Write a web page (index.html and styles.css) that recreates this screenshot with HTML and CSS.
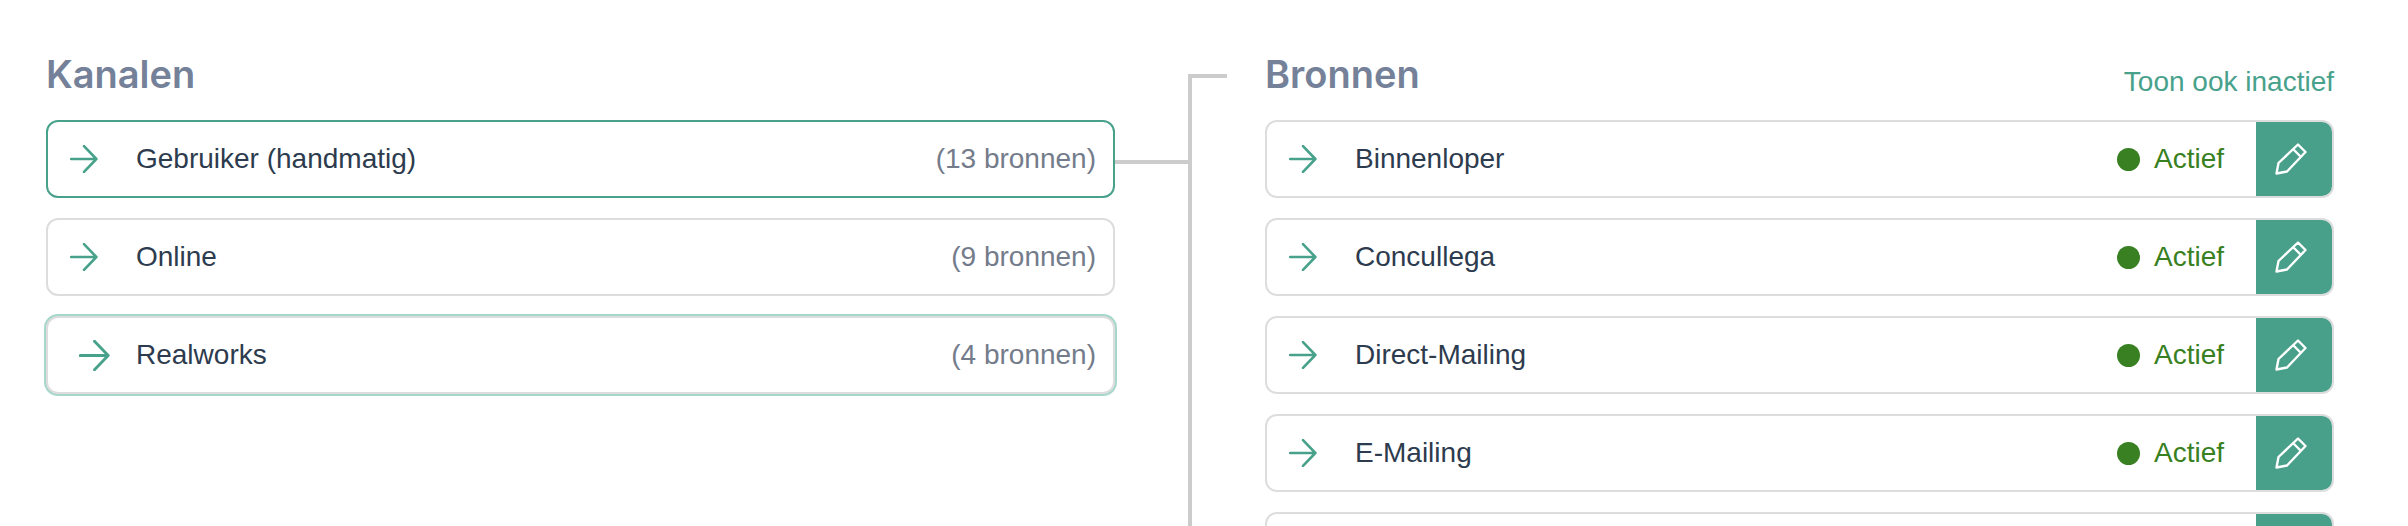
FILE: index.html
```html
<!DOCTYPE html>
<html lang="nl">
<head>
    <meta charset="UTF-8">
    <meta name="viewport" content="width=device-width, initial-scale=1.0">
    <title>Kanalen en bronnen</title>
    <link rel="stylesheet" href="styles.css">
</head>
<body>

    <!-- Iconen -->
    <svg class="icon-defs" aria-hidden="true">
        <symbol id="arrow" viewBox="0 0 26 26">
            <path stroke-width="2.4" d="M1 13H24.5M13 1L24.5 13L13 25" />
        </symbol>
        <symbol id="pencil" viewBox="0 0 32 32">
            <path stroke-width="2.4" d="M1.5 30.5L3.5 20L23 1.5L30.5 9L12 28.5ZM18 6L26 14" />
        </symbol>
    </svg>

    <main class="page">
        <section class="column">
            <div class="column-header">
                <h2 class="column-title">Kanalen</h2>
            </div>
            <div class="list">
                <button class="card channel channel-active" type="button">
                    <span class="card-icon"><svg class="arrow"><use href="#arrow" /></svg></span>
                    <span class="card-name">Gebruiker (handmatig)</span>
                    <span class="card-count">(13 bronnen)</span>
                </button>
                <button class="card channel" type="button">
                    <span class="card-icon"><svg class="arrow"><use href="#arrow" /></svg></span>
                    <span class="card-name">Online</span>
                    <span class="card-count">(9 bronnen)</span>
                </button>
                <button class="card channel channel-focus" type="button">
                    <span class="card-icon"><svg class="arrow"><use href="#arrow" /></svg></span>
                    <span class="card-name">Realworks</span>
                    <span class="card-count">(4 bronnen)</span>
                </button>
            </div>
        </section>

        <!-- Lijn van het gekozen kanaal naar de bronnen -->
        <div class="connector">
            <div class="connector-in"></div>
            <div class="connector-out"></div>
        </div>

        <section class="column">
            <div class="column-header">
                <h2 class="column-title">Bronnen</h2>
                <a class="toggle-link" href="#">Toon ook inactief</a>
            </div>
            <div class="list">
                <div class="card">
                    <span class="card-icon"><svg class="arrow"><use href="#arrow" /></svg></span>
                    <span class="card-name">Binnenloper</span>
                    <span class="status">Actief</span>
                    <button class="edit-button" type="button" aria-label="Bewerken"><svg class="pencil"><use href="#pencil" /></svg></button>
                </div>
                <div class="card">
                    <span class="card-icon"><svg class="arrow"><use href="#arrow" /></svg></span>
                    <span class="card-name">Concullega</span>
                    <span class="status">Actief</span>
                    <button class="edit-button" type="button" aria-label="Bewerken"><svg class="pencil"><use href="#pencil" /></svg></button>
                </div>
                <div class="card">
                    <span class="card-icon"><svg class="arrow"><use href="#arrow" /></svg></span>
                    <span class="card-name">Direct-Mailing</span>
                    <span class="status">Actief</span>
                    <button class="edit-button" type="button" aria-label="Bewerken"><svg class="pencil"><use href="#pencil" /></svg></button>
                </div>
                <div class="card">
                    <span class="card-icon"><svg class="arrow"><use href="#arrow" /></svg></span>
                    <span class="card-name">E-Mailing</span>
                    <span class="status">Actief</span>
                    <button class="edit-button" type="button" aria-label="Bewerken"><svg class="pencil"><use href="#pencil" /></svg></button>
                </div>
                <div class="card">
                    <span class="card-name"></span>
                    <button class="edit-button" type="button" aria-label="Bewerken"></button>
                </div>
            </div>
        </section>
    </main>

</body>
</html>
```

FILE: styles.css
```css
* {
    box-sizing: border-box;
}

body {
    margin: 0;
    background-color: white;
    color: #2d3b4e;
    font-family: "Liberation Sans", Arial, sans-serif;
    font-size: 28px;
    line-height: 32px;
}

.icon-defs {
    display: none;
}

.page {
    display: grid;
    grid-template-columns: 1fr 150px 1fr;
    height: 100vh;
    padding: 50px 74px 0 46px;
    overflow: hidden;
}

.column-header {
    display: flex;
    justify-content: space-between;
    align-items: flex-end;
    padding-bottom: 22px;
}

.column-title {
    margin: 0;
    color: #748198;
    font-family: Inter, sans-serif;
    font-size: 38px;
    font-weight: 600;
    line-height: 48px;
}

.toggle-link {
    color: #48a18b;
    text-decoration: none;
}

.list {
    display: flex;
    flex-direction: column;
    gap: 20px;
}

.card {
    display: flex;
    align-items: center;
    width: 100%;
    min-height: 78px;
    padding: 0;
    border: 2px solid #dddddd;
    border-radius: 12px;
    background-color: white;
    color: inherit;
    font: inherit;
    text-align: left;
    overflow: hidden;
}

.channel {
    padding-right: 17px;
    cursor: pointer;
}

.channel-active {
    border-color: #48a18b;
}

.channel-focus {
    box-shadow: 0 0 0 2px #a6d7cb;
}

.card-icon {
    display: flex;
    flex: none;
    width: 88px;
    padding-left: 22px;
}

.arrow {
    width: 28px;
    height: 28px;
    fill: none;
    stroke: #48a18b;
    stroke-linecap: round;
    stroke-linejoin: round;
}

/* Pijl schuift op en wordt groter */
.channel-focus .card-icon {
    padding-left: 31px;
}

.channel-focus .arrow {
    width: 31px;
    height: 31px;
}

.card-name {
    flex: 1;
}

.card-count {
    color: #747c8b;
}

.status {
    display: flex;
    align-items: center;
    gap: 14px;
    padding-right: 32px;
    color: #388021;
}

.status::before {
    content: "";
    width: 23px;
    height: 23px;
    border-radius: 50%;
    background-color: #388021;
}

.edit-button {
    display: flex;
    justify-content: center;
    align-items: center;
    align-self: stretch;
    width: 76px;
    padding: 0 6px 0 0;
    border: none;
    background-color: #48a08b;
    cursor: pointer;
}

.pencil {
    width: 32px;
    height: 32px;
    fill: none;
    stroke: white;
    stroke-linejoin: round;
}

.connector {
    display: flex;
}

.connector-in {
    width: 73px;
    height: 4px;
    margin-top: 110px;
    background-color: #cccccc;
}

.connector-out {
    width: 39px;
    margin-top: 24px;
    border-top: 4px solid #cccccc;
    border-left: 4px solid #cccccc;
}
```
